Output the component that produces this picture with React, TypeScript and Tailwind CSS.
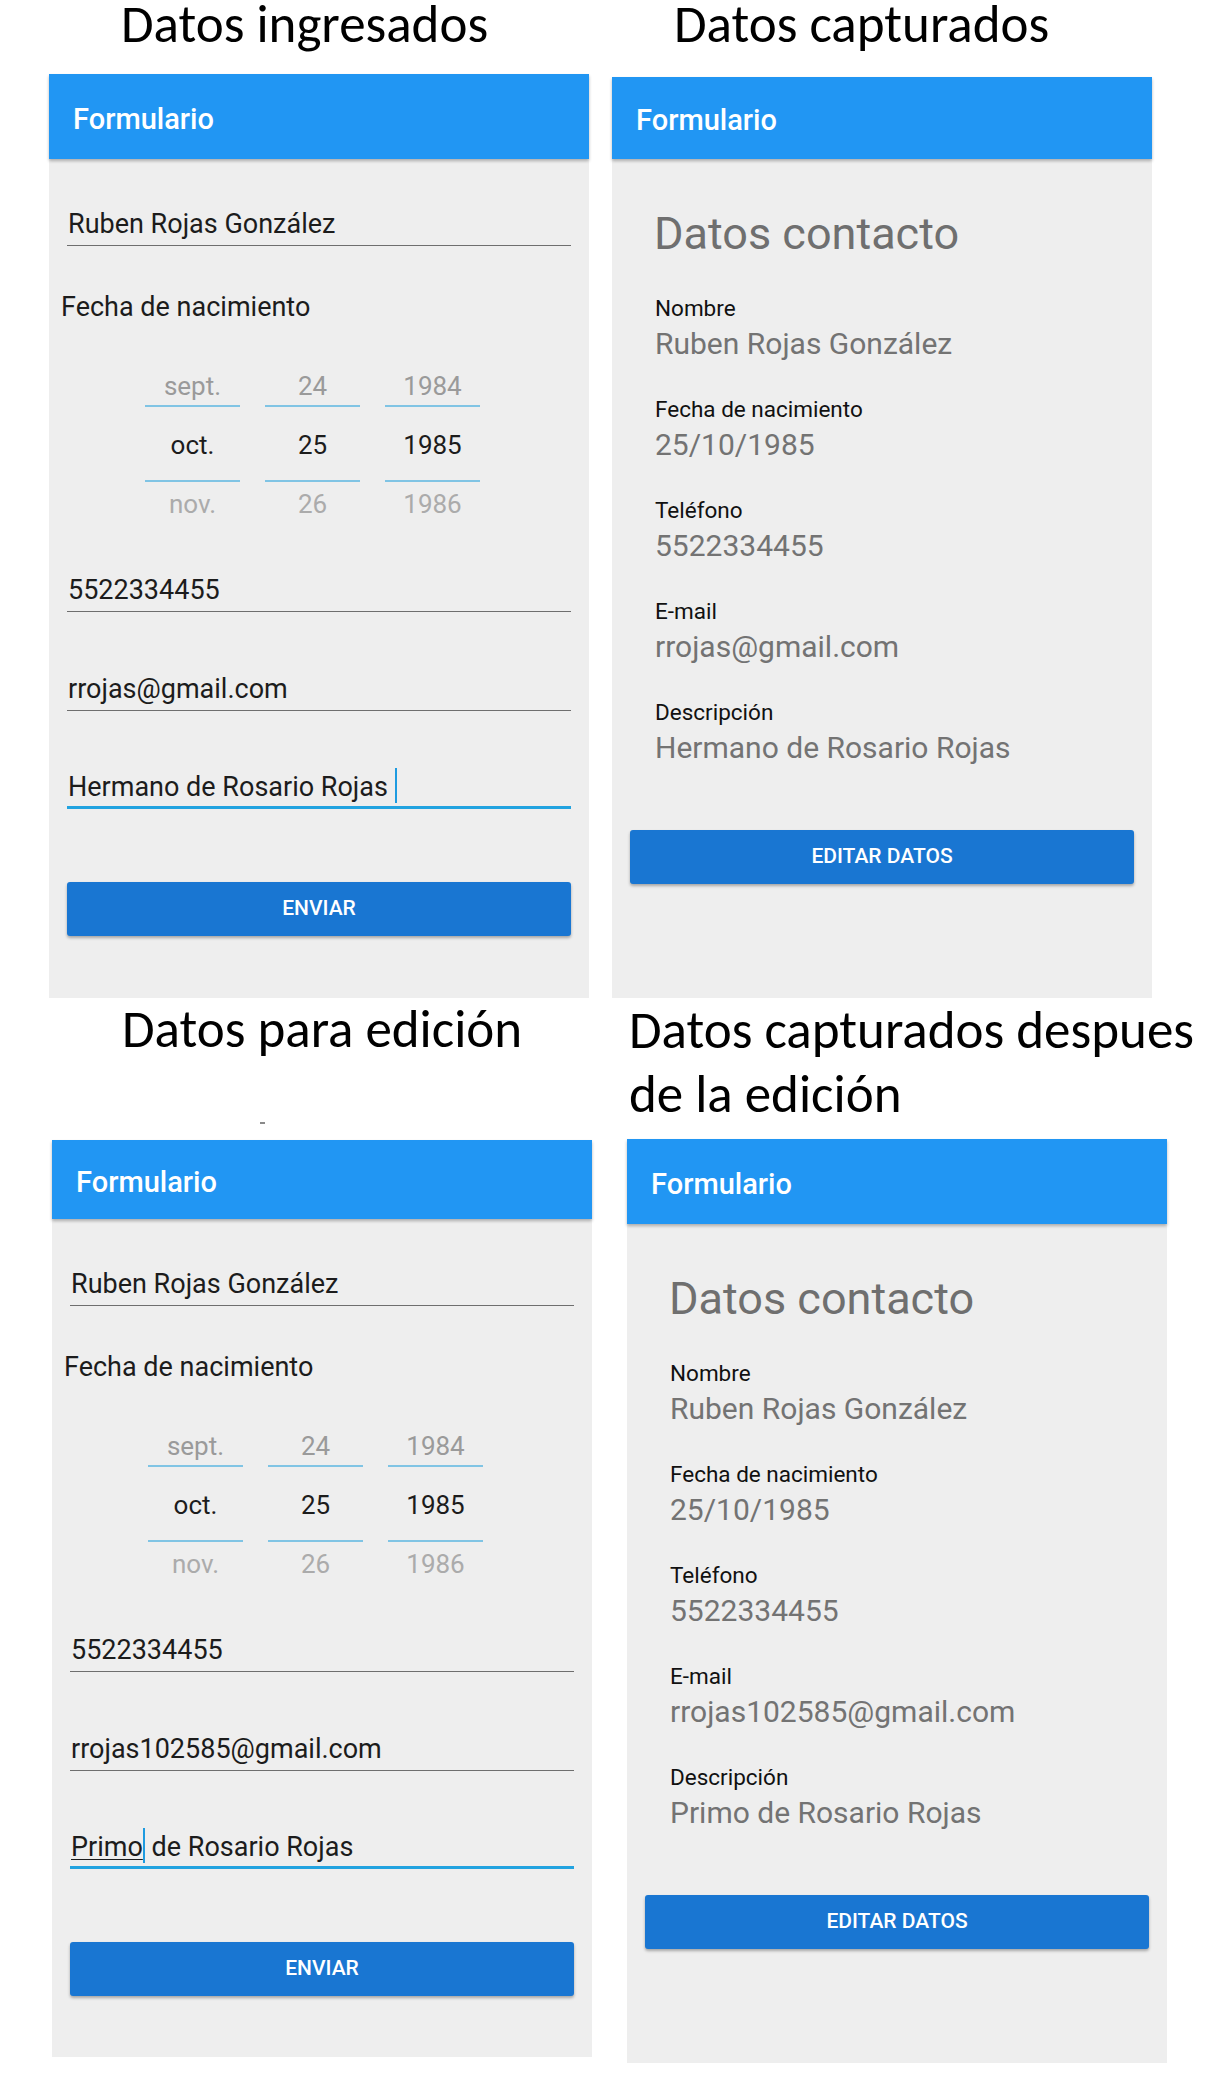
import type { ReactNode } from 'react';

const titleFont = "font-['Carlito','Lato',sans-serif]";

const Header = ({ h }: { h: string }) => (
  <div className={`relative z-10 flex items-center bg-[#2196F3] pl-[24px] pt-[4px] shadow-[0_2px_3px_rgba(0,0,0,0.28)] ${h}`}>
    <span className="text-[29px] leading-[32px] font-medium text-white">Formulario</span>
  </div>
);

const Field = ({ children, focused, className = '' }: { children: ReactNode; focused?: boolean; className?: string }) => (
  <div
    className={`text-[27px] leading-[28px] text-[#1c1c1c] pl-[1px] whitespace-nowrap ${
      focused ? 'pb-[5px] border-b-[3px] border-[#22a3e0]' : 'pb-[7px] border-b border-[#6e6e6e]'
    } ${className}`}
  >
    {children}
  </div>
);

// text cursor drawn over the line so it does not grow the line box
const Cursor = () => (
  <span className="relative inline-block w-[2px] h-0">
    <span className="absolute left-0 top-[-28px] w-[2px] h-[35px] bg-[#1e9be0]" />
  </span>
);

const pickerCols = [
  ['sept.', 'oct.', 'nov.'],
  ['24', '25', '26'],
  ['1984', '1985', '1986'],
];

const Picker = () => (
  <div className="mt-[43px] ml-[78px] flex gap-[25px] text-[26px] leading-[28px]">
    {pickerCols.map((col) => (
      <div key={col[1]} className="w-[95px] flex flex-col">
        <div className="h-[43px] border-b-2 border-[#80c4e4] flex items-end justify-center pb-[5px] text-[#9a9a9a]">{col[0]}</div>
        <div className="h-[75px] border-b-2 border-[#80c4e4] flex items-center justify-center pt-[3px] text-[#1c1c1c]">{col[1]}</div>
        <div className="pt-[8px] text-center text-[#ababab]">{col[2]}</div>
      </div>
    ))}
  </div>
);

const SubmitButton = ({ label, className = '' }: { label: string; className?: string }) => (
  <div className={`h-[54px] rounded-[3px] bg-[#1976D2] shadow-[0_2px_3px_rgba(0,0,0,0.3)] flex items-center justify-center text-[21px] font-medium text-white ${className}`}>
    {label}
  </div>
);

const FormPanel = ({
  headerH,
  panelH,
  email,
  desc,
}: {
  headerH: string;
  panelH: string;
  email: string;
  desc: ReactNode;
}) => (
  <div className={`bg-[#eeeeee] flex flex-col ${panelH}`}>
    <Header h={headerH} />
    <div className="flex flex-col px-[18px]">
      <Field className="mt-[51px]">Ruben Rojas González</Field>
      <div className="mt-[47px] -ml-[6px] text-[27px] leading-[28px] text-[#1c1c1c]">Fecha de nacimiento</div>
      <Picker />
      <Field className="mt-[58px]">5522334455</Field>
      <Field className="mt-[63px]">{email}</Field>
      <Field focused className="mt-[62px]">{desc}</Field>
      <SubmitButton label="ENVIAR" className="mt-[73px]" />
    </div>
  </div>
);

const DataPanel = ({ headerH, panelH, email, desc }: { headerH: string; panelH: string; email: string; desc: string }) => {
  const rows = [
    ['Nombre', 'Ruben Rojas González'],
    ['Fecha de nacimiento', '25/10/1985'],
    ['Teléfono', '5522334455'],
    ['E-mail', email],
    ['Descripción', desc],
  ];
  return (
    <div className={`bg-[#eeeeee] flex flex-col ${panelH}`}>
      <Header h={headerH} />
      <div className="flex flex-col px-[18px]">
        <div className="mt-[51px] pl-[24px] text-[45px] leading-[48px] text-[#6f6f6f]">Datos contacto</div>
        <div className="mt-[38px] pl-[25px] flex flex-col gap-[37px]">
          {rows.map(([label, value]) => (
            <div key={label} className="flex flex-col">
              <div className="text-[22.5px] leading-[24px] text-[#111]">{label}</div>
              <div className="mt-[8px] text-[30px] leading-[32px] text-[#737373] whitespace-nowrap">{value}</div>
            </div>
          ))}
        </div>
        <SubmitButton label="EDITAR DATOS" className="mt-[66px]" />
      </div>
    </div>
  );
};

export default function App() {
  return (
    <div className="w-[1215px] h-[2090px] bg-white font-['Roboto',sans-serif] overflow-hidden">
      {/* first row */}
      <div className="flex h-[998px]">
        <div className="ml-[49px] w-[540px] flex flex-col">
          <div className={`h-[74px] pl-[72px] text-[53px] leading-[48px] text-black whitespace-nowrap ${titleFont}`}>Datos ingresados</div>
          <FormPanel
            headerH="h-[85px]"
            panelH="h-[924px]"
            email="rrojas@gmail.com"
            desc={
              <>
                Hermano de Rosario Rojas <Cursor />
              </>
            }
          />
        </div>
        <div className="ml-[23px] w-[540px] flex flex-col">
          <div className={`h-[77px] pl-[62px] text-[53px] leading-[48px] text-black whitespace-nowrap ${titleFont}`}>Datos capturados</div>
          <DataPanel headerH="h-[82px]" panelH="h-[921px]" email="rrojas@gmail.com" desc="Hermano de Rosario Rojas" />
        </div>
      </div>

      {/* second row */}
      <div className="flex">
        <div className="ml-[52px] w-[540px] flex flex-col">
          <div className="h-[142px] flex flex-col">
            <div className={`pt-[7px] pl-[70px] text-[53px] leading-[48px] text-black whitespace-nowrap ${titleFont}`}>Datos para edición</div>
            <div className="mt-[69px] ml-[208px] w-[5px] h-[2px] bg-[#8a8a8a]" />
          </div>
          <FormPanel
            headerH="h-[79px]"
            panelH="h-[917px]"
            email="rrojas102585@gmail.com"
            desc={
              <>
                <span className="underline decoration-1 underline-offset-[3px]">Primo</span>
                <Cursor /> de Rosario Rojas
              </>
            }
          />
        </div>
        <div className="ml-[35px] w-[540px] flex flex-col">
          <div className={`h-[141px] pl-[2px] text-[53px] leading-[64px] text-black whitespace-nowrap ${titleFont}`}>
            Datos capturados despues
            <br />
            de la edición
          </div>
          <DataPanel headerH="h-[85px]" panelH="h-[924px]" email="rrojas102585@gmail.com" desc="Primo de Rosario Rojas" />
        </div>
      </div>
    </div>
  );
}
